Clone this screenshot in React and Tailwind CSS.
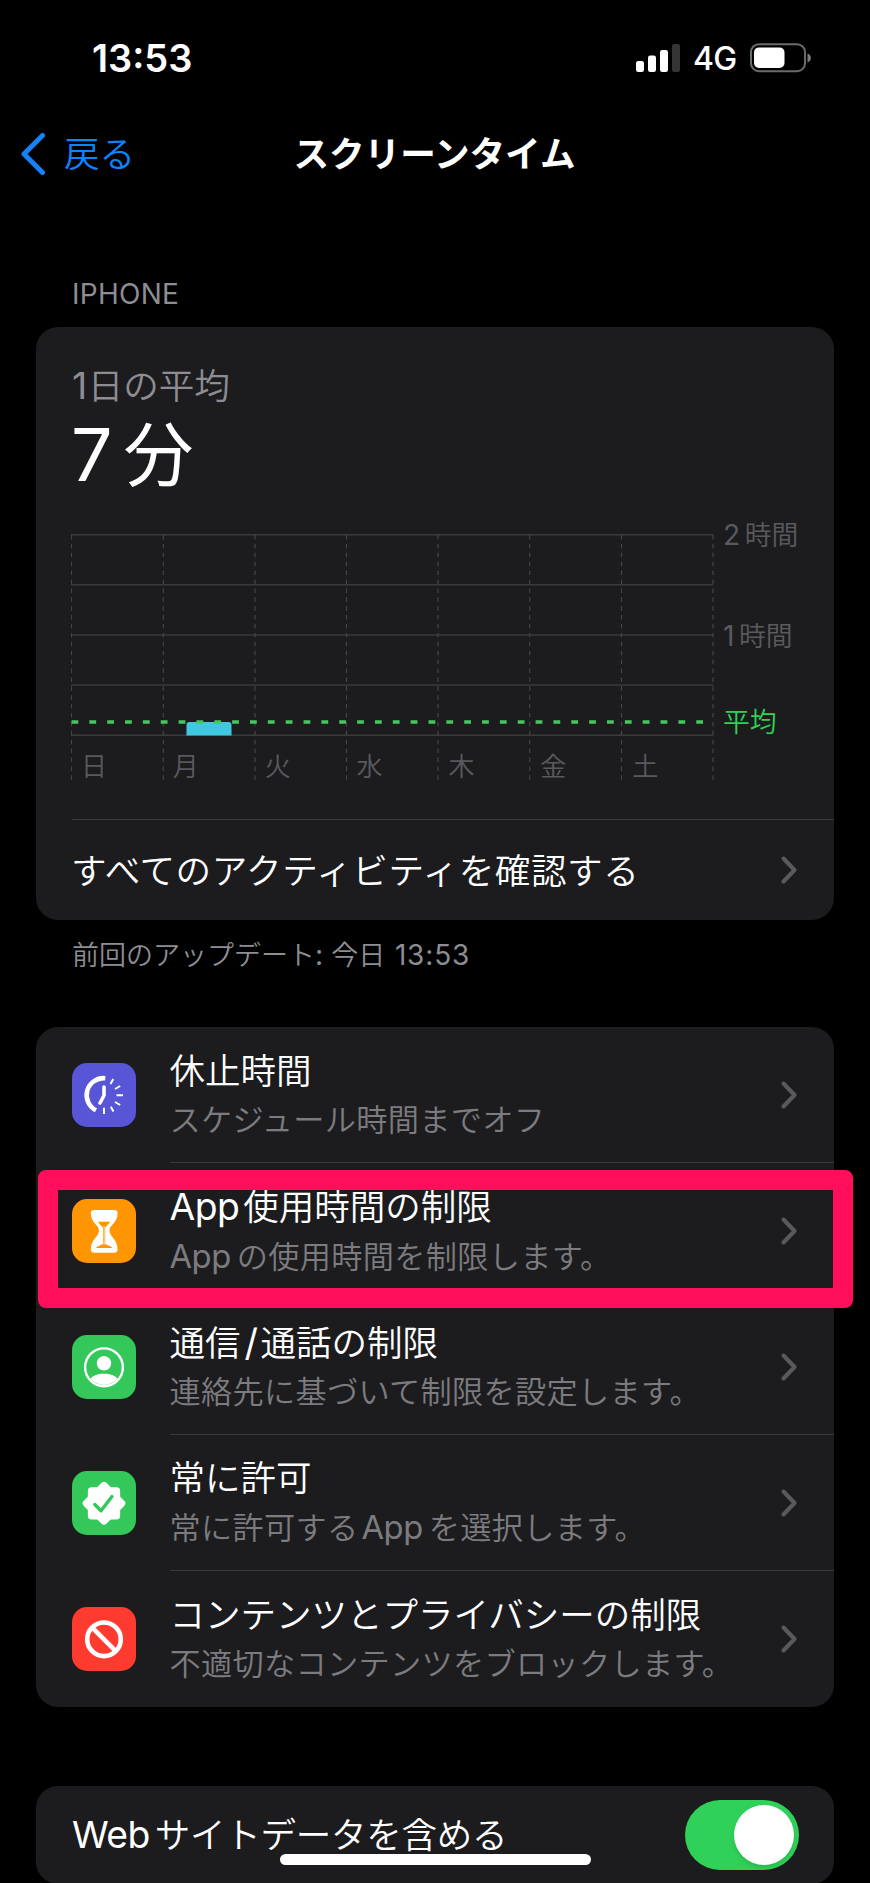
import React, { useState } from "react";

const days = ["日", "月", "火", "水", "木", "金", "土"];
const gridX = [0.5, 92.3, 184, 275.5, 367, 458.7, 550.5, 642];
const gridY = [0.8, 50.8, 101, 151, 201.3];

const Latin = ({ children, className = "" }) => (
  <span className={`text-[1.05em] font-normal tracking-[-0.015em] ${className}`}>
    {children}
  </span>
);

const Chevron = () => (
  <svg className="w-4 h-7 shrink-0 mr-px" viewBox="0 0 16 28" fill="none">
    <path
      d="M2.5 2.5 L13.5 14 L2.5 25.5"
      stroke="#5a5a5e"
      strokeWidth="4"
      strokeLinecap="round"
      strokeLinejoin="round"
    />
  </svg>
);

const DowntimeIcon = () => (
  <svg className="size-16" viewBox="0 0 64 64" fill="none" stroke="#fff">
    <path d="M33.3 15.2 A17 17 0 0 0 24 47.3" strokeWidth="4.6" />
    <path
      d="M32 24 V32.5 L28 40"
      strokeWidth="3.6"
      strokeLinecap="round"
      strokeLinejoin="round"
    />
    <path
      d="M38.5 21 L41.3 16 M43 26 L48.2 23 M44.5 32.3 H51 M43 39 L48.2 42 M38.8 43.7 L41.5 48.5 M32 44.7 V51"
      strokeWidth="2"
    />
  </svg>
);

const HourglassIcon = () => (
  <svg className="size-16" viewBox="0 0 64 64">
    <path
      d="M22 11 H42.5 C44.5 11 45.6 12.2 45.6 14 C45.6 24 37.5 26 37.5 31.5 C37.5 38 45.6 40 45.6 50.5 C45.6 52.5 44.5 53.7 42.5 53.7 H22 C20 53.7 18.8 52.5 18.8 50.5 C18.8 40 27 38 27 31.5 C27 26 18.8 24 18.8 14 C18.8 12.2 20 11 22 11 Z"
      fill="#fff"
    />
    <path
      d="M25.8 22.8 H38.4 L33.2 28.8 V45 L39.8 48 V49 H24.4 V48 L31 45 V28.8 Z"
      fill="#ff9503"
    />
    <path d="M32.1 27 V46" stroke="#fff" strokeWidth="0.8" />
  </svg>
);

const PersonIcon = () => (
  <svg className="size-16" viewBox="0 0 64 64">
    <circle cx="32" cy="32.3" r="18.9" fill="none" stroke="#fff" strokeWidth="2.4" />
    <circle cx="32" cy="28.3" r="7.2" fill="#fff" />
    <path d="M18.5 43.8 C22.5 37 41.5 37 45.5 43.8 A18 18 0 0 1 18.5 43.8 Z" fill="#fff" />
  </svg>
);

const SealIcon = () => (
  <svg className="size-16" viewBox="0 0 64 64">
    <g fill="#fff" stroke="#fff" strokeWidth="7.5" strokeLinejoin="round">
      <rect x="19.6" y="19.9" width="24.8" height="24.8" />
      <rect x="19.6" y="19.9" width="24.8" height="24.8" transform="rotate(45 32 32.3)" />
    </g>
    <path
      d="M22.8 33.5 L29 39.7 L40 25.5"
      fill="none"
      stroke="#34c759"
      strokeWidth="3.4"
      strokeLinecap="round"
      strokeLinejoin="round"
    />
  </svg>
);

const BlockIcon = () => (
  <svg className="size-16" viewBox="0 0 64 64" fill="none" stroke="#fff" strokeWidth="4.6">
    <circle cx="32" cy="32.3" r="16.8" />
    <path d="M20 20.3 L44 44.3" />
  </svg>
);

const rows = [
  {
    id: "downtime",
    icon: <DowntimeIcon />,
    color: "bg-[#5856d6]",
    title: "休止時間",
    sub: "スケジュール時間までオフ",
  },
  {
    id: "limits",
    icon: <HourglassIcon />,
    color: "bg-[#ff9503]",
    title: (
      <>
        <Latin className="mr-1">App</Latin>使用時間の制限
      </>
    ),
    sub: (
      <>
        <Latin className="mr-1.5">App</Latin>の使用時間を制限します。
      </>
    ),
    marked: true,
  },
  {
    id: "communication",
    icon: <PersonIcon />,
    color: "bg-[#34c759]",
    title: (
      <>
        通信<Latin className="ml-1 mr-[3px]">/</Latin>通話の制限
      </>
    ),
    sub: "連絡先に基づいて制限を設定します。",
  },
  {
    id: "allowed",
    icon: <SealIcon />,
    color: "bg-[#34c759]",
    title: "常に許可",
    sub: (
      <>
        常に許可する<Latin className="ml-[3px] mr-1.5">App</Latin>を選択します。
      </>
    ),
  },
  {
    id: "content",
    icon: <BlockIcon />,
    color: "bg-[#ff3b30]",
    title: "コンテンツとプライバシーの制限",
    sub: "不適切なコンテンツをブロックします。",
  },
];

const StatusBar = () => (
  <div className="h-[116px] flex items-center justify-between pl-[92px] pr-[58px]">
    <div className="text-[38px] font-semibold leading-none">13:53</div>
    <div className="flex items-center">
      <svg className="w-11 h-7" viewBox="0 0 44 28" fill="#fff">
        <rect x="0" y="17" width="8" height="11" rx="2.2" />
        <rect x="12" y="11.5" width="8" height="16.5" rx="2.2" />
        <rect x="24" y="6" width="8" height="22" rx="2.2" />
        <rect x="36" y="0" width="8" height="28" rx="2.2" fill="#353535" />
      </svg>
      <div className="ml-[13px] w-[43px] pt-0.5 text-[32px] font-medium leading-none tracking-tight">
        4G
      </div>
      <svg className="w-[62px] h-[30px] ml-3.5" viewBox="0 0 62 30">
        <rect x="1" y="1.2" width="54" height="27" rx="8" fill="none" stroke="#6b6b6b" strokeWidth="2" />
        <rect x="4" y="4.4" width="30.5" height="20.6" rx="5" fill="#fff" />
        <path d="M57.5 10.5 C62 12 62 18 57.5 19.5 Z" fill="#7a7a7a" />
      </svg>
    </div>
  </div>
);

const Chart = () => (
  <div className="-ml-px flex">
    <div className="w-[643px] h-[247px] grid grid-cols-1 grid-rows-1">
      <svg className="col-start-1 row-start-1 w-[643px] h-[247px]" viewBox="0 0 643 247">
        {gridY.map((y) => (
          <line key={y} x1="0" x2="642" y1={y} y2={y} stroke="#3a3a3c" strokeWidth="1.4" />
        ))}
        {gridX.map((x) => (
          <line
            key={x}
            x1={x}
            x2={x}
            y1="1"
            y2="246"
            stroke="#444446"
            strokeWidth="1.2"
            strokeDasharray="4.5 4.4"
          />
        ))}
        <path d="M115.5 201.5 V191 Q115.5 188 118.5 188 H157.5 Q160.5 188 160.5 191 V201.5 Z" fill="#40c8e0" />
        <line
          x1="0.5"
          x2="636"
          y1="188"
          y2="188"
          stroke="#43c75e"
          strokeWidth="3.4"
          strokeDasharray="6.8 11.05"
        />
      </svg>
      <div className="col-start-1 row-start-1 self-end grid grid-cols-7">
        {days.map((day) => (
          <div key={day} className="pl-2.5 text-[26px] leading-[28px] text-[#5a5a5e]">
            {day}
          </div>
        ))}
      </div>
    </div>
    <div className="pl-[9px] text-[26.8px] leading-[30px] text-[#5a5a5e]">
      <div className="-mt-[14px]">
        <Latin className="mr-[5px]">2</Latin>時間
      </div>
      <div className="mt-[71px]">
        <Latin className="mr-[5px]">1</Latin>時間
      </div>
      <div className="mt-[56px] text-[#30d158]">平均</div>
    </div>
  </div>
);

const Row = ({ item, last }) => (
  <div className="relative h-[136px] flex items-center pl-[35.5px]">
    <div className={`size-[64.5px] rounded-[15px] overflow-hidden ${item.color}`}>
      {item.icon}
    </div>
    <div
      className={`ml-[33.5px] flex-1 h-full flex items-center pr-9 border-[#38383a] ${
        last ? "" : "border-b"
      }`}
    >
      <div className="flex-1 pt-0.5 whitespace-nowrap">
        <div className="text-[35.5px] leading-[48px]">{item.title}</div>
        <div className="text-[31.2px] leading-[48px] tracking-[0.01em] text-[#7c7c80]">
          {item.sub}
        </div>
      </div>
      <Chevron />
    </div>
    {item.marked && (
      <div className="absolute z-10 left-[2px] top-[7px] w-[815px] h-[138px] rounded-lg bg-transparent border-20 border-[#ff0f5b]"></div>
    )}
  </div>
);

const App = () => {
  const [includeWeb, setIncludeWeb] = useState(true);

  return (
    <div className="relative w-[870px] h-[1883px] overflow-hidden bg-black text-white font-[350] font-['Inter','Noto_Sans_CJK_JP',sans-serif]">
      <StatusBar />

      <div className="h-[76px] grid grid-cols-[1fr_auto_1fr] items-center px-5">
        <button className="flex items-center text-[35.6px] leading-none text-[#0a84ff]">
          <svg className="w-[26px] h-[44px]" viewBox="0 0 26 44" fill="none">
            <path
              d="M22.5 3.5 L4 22 L22.5 40.5"
              stroke="#1583f7"
              strokeWidth="5"
              strokeLinecap="round"
              strokeLinejoin="round"
            />
          </svg>
          <span className="ml-[18px] pt-0.5">戻る</span>
        </button>
        <h1 className="pt-0.5 -ml-px text-center text-[35.6px] font-semibold leading-none whitespace-nowrap">
          スクリーンタイム
        </h1>
      </div>

      <div className="px-9">
        <div className="mt-[84px] pl-9 text-[28px] leading-9 font-normal tracking-[0.01em] text-[#8d8d93]">
          IPHONE
        </div>

        <div className="mt-[15px] h-[593px] rounded-[22px] bg-[#1c1c1e] overflow-hidden">
          <div className="h-[492px] pl-9 pt-9">
            <div className="text-[35.6px] leading-[46px] text-[#8d8d93]">
              <Latin className="mr-px">1</Latin>日の平均
            </div>
            <div className="text-[70px] leading-[90px] mb-[33px] font-normal">
              <Latin className="-ml-px mr-3">7</Latin>分
            </div>
            <Chart />
          </div>
          <div className="ml-9 pr-9 h-[101px] flex items-center justify-between border-t border-[#38383a]">
            <span className="pt-[3px] -ml-px text-[35.6px] leading-[48px] tracking-[0.016em]">
              すべてのアクティビティを確認する
            </span>
            <Chevron />
          </div>
        </div>

        <div className="mt-4 pl-9 text-[27px] leading-[38px] text-[#8d8d93]">
          前回のアップデート<Latin>: </Latin>
          <span className="ml-px">今日</span>{" "}
          <span className="ml-0.5 text-[28px] font-normal tracking-[0.03em]">
            13:53
          </span>
        </div>

        <div className="mt-[52px] rounded-[22px] bg-[#1c1c1e]">
          {rows.map((item, i) => (
            <Row key={item.id} item={item} last={i === rows.length - 1} />
          ))}
        </div>

        <div className="mt-[79px] h-[98px] rounded-[22px] bg-[#1c1c1e] flex items-center justify-between pl-9 pr-[35px]">
          <span className="pt-px text-[35.5px] leading-[48px] tracking-[-0.007em]">
            <Latin className="mr-[5px]">Web</Latin>サイトデータを含める
          </span>
          <button
            className={`w-[114px] h-[70px] rounded-full p-[5px] flex ${
              includeWeb ? "bg-[#30d158] justify-end" : "bg-[#39393d]"
            }`}
            onClick={() => setIncludeWeb(!includeWeb)}
          >
            <span className="size-[60px] rounded-full bg-white shadow-md"></span>
          </button>
        </div>
      </div>

      {/* home indicator */}
      <div className="absolute left-[280px] top-[1854px] w-[311px] h-[11px] rounded-full bg-white"></div>
    </div>
  );
};

export default App;
